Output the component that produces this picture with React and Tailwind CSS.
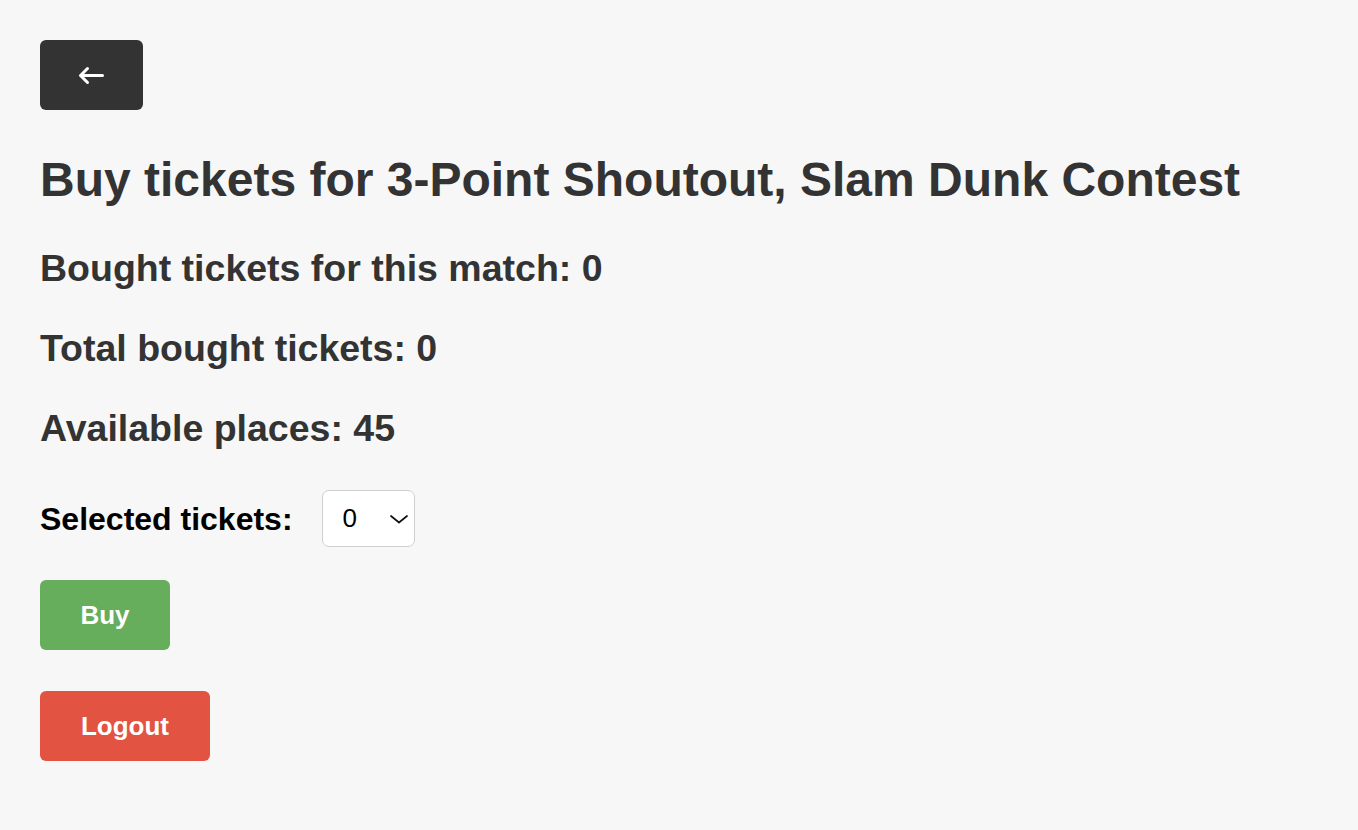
import React from "react";

export default function App() {
  return (
    <div className="min-h-[830px] w-full bg-[#f7f7f7] p-[40px] font-['Liberation_Sans',Arial,sans-serif] text-[#333]">
      <div className="flex flex-col items-start">
        <button className="flex h-[70px] w-[103px] items-center justify-center rounded-[6px] bg-[#333333]">
          <svg width="27" height="19" viewBox="0 0 27 19" fill="none">
            <path d="M2.5 9.5H24.5M9.5 2.5L2.5 9.5L9.5 16.5" stroke="#ffffff" strokeWidth="3" strokeLinecap="round" strokeLinejoin="round" />
          </svg>
        </button>

        <h1 className="mt-[42px] text-[48px] font-bold leading-[56px]">
          Buy tickets for 3-Point Shoutout, Slam Dunk Contest
        </h1>

        <h3 className="mt-[38px] text-[37.5px] font-bold leading-[44px]">Bought tickets for this match: 0</h3>
        <h3 className="mt-[36px] text-[37.5px] font-bold leading-[44px]">Total bought tickets: 0</h3>
        <h3 className="mt-[36px] text-[37.5px] font-bold leading-[44px]">Available places: 45</h3>

        <div className="mt-[40px] flex h-[57px] items-center gap-[29px]">
          <label className="text-[32px] font-bold leading-[40px] text-black">Selected tickets:</label>
          <div className="relative h-[57px] w-[93px]">
            <select className="h-full w-full appearance-none rounded-[7px] border-[1.5px] border-[#cfcfcf] bg-white pl-[20px] text-[26px] text-black outline-none">
              <option>0</option>
              <option>1</option>
              <option>2</option>
              <option>3</option>
              <option>4</option>
              <option>5</option>
            </select>
            <svg className="pointer-events-none absolute left-[67px] top-[24px]" width="20" height="10" viewBox="0 0 20 10" fill="none">
              <path d="M2 2L10 8.5L18 2" stroke="#111" strokeWidth="1.7" strokeLinecap="round" strokeLinejoin="round" />
            </svg>
          </div>
        </div>

        <button className="mt-[33px] flex h-[70px] w-[130px] items-center justify-center rounded-[6px] bg-[#66ad5c] text-[26px] font-bold text-white">
          Buy
        </button>
        <button className="mt-[41px] flex h-[70px] w-[170px] items-center justify-center rounded-[6px] bg-[#e25342] text-[26px] font-bold text-white">
          Logout
        </button>
      </div>
    </div>
  );
}
